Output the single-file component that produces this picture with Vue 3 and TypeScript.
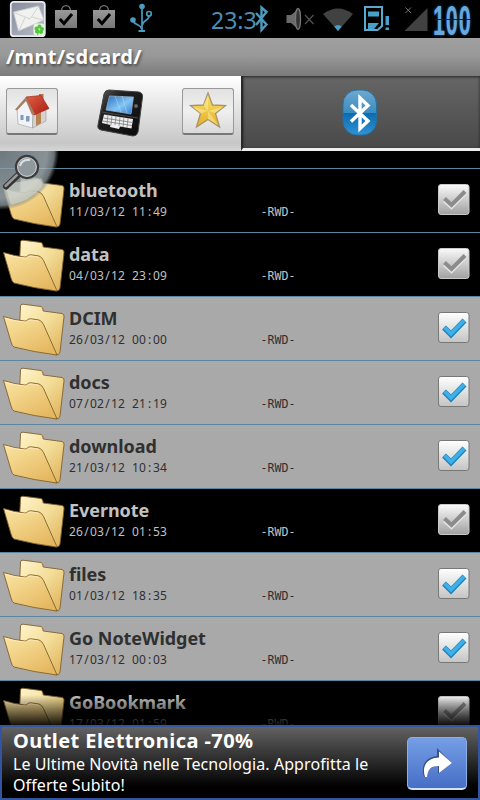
<template>
  <div class="screen">
    <div class="statusbar">
      <svg class="status-icons" width="480" height="38" viewBox="0 0 480 38">
        <defs>
          <linearGradient id="bag" x1="0" y1="0" x2="0" y2="1">
            <stop offset="0" stop-color="#999" />
            <stop offset="1" stop-color="#777" />
          </linearGradient>
          <linearGradient id="mail" x1="0" y1="0" x2="1" y2="1">
            <stop offset="0" stop-color="#858b9b" />
            <stop offset="1" stop-color="#b9bdc9" />
          </linearGradient>
        </defs>
        <!-- mail -->
        <rect x="10.8" y="1.8" width="34" height="34.4" rx="3" fill="url(#mail)" stroke="#e9e7ef" stroke-width="1.8" />
        <path d="M13.5 12 L38.5 6 L44 20 L18.5 31 Z" fill="#f1f1f0" stroke="#c9c9cc" stroke-width=".8" />
        <path d="M14 12.5 L30 19 L38.5 6.5 M19 30.5 L25 17.5 M43 20 L32 17" fill="none" stroke="#d3d3d3" stroke-width="1" />
        <rect x="33.5" y="23.5" width="11" height="12" rx="3" fill="#e5f5df" />
        <path d="M39 29.5 L37.5 35" stroke="#4fc53a" stroke-width="1.2" />
        <g fill="#4fc53a">
          <circle cx="36.5" cy="28.5" r="2" /><circle cx="39.5" cy="26.5" r="2" />
          <circle cx="42" cy="29" r="2" /><circle cx="37" cy="31.5" r="2" /><circle cx="41" cy="32" r="2" />
        </g>
        <!-- market bags -->
        <g v-for="x in [55, 93]" :key="x" :transform="`translate(${x} 0)`">
          <path d="M6.5 11 C6.5 3.8 15.5 3.8 15.5 11" fill="none" stroke="#777" stroke-width="1.3" />
          <rect y="10" width="22" height="18" fill="url(#bag)" />
          <path d="M4.8 19 L9 23.5 L17 14" fill="none" stroke="#000" stroke-width="3" />
        </g>
        <!-- usb -->
        <g fill="none" stroke="#4b9ac0" stroke-width="1.7">
          <path d="M142 7 V31 M133 20.5 C133 25 141.5 24 141.5 29 M149 16 C149 21 142.5 20 142.5 25" />
          <circle cx="149" cy="13.8" r="2.3" />
          <path d="M138.5 31 H145" stroke-width="2" />
        </g>
        <circle cx="142" cy="6.5" r="2.8" fill="#4b9ac0" />
        <circle cx="133" cy="20" r="2.8" fill="#4b9ac0" />
        <!-- bluetooth -->
        <path d="M256 13 L266.5 24.5 L261.5 30 V7.5 L266.5 12 L256 25" fill="none" stroke="#4b9ac0" stroke-width="2.4" />
        <!-- muted speaker -->
        <path d="M286.5 15 H291 L296 11 V27.5 L291 23 H286.5 Z" fill="#6b6b6b" />
        <ellipse cx="298" cy="19" rx="2.5" ry="10.5" fill="#333" stroke="#777" stroke-width="1.3" />
        <path d="M305 15 L313.5 24 M313.5 15 L305 24" stroke="#555" stroke-width="1.1" />
        <!-- wifi -->
        <path d="M323 14 Q338 3 353 14 L338 31 Z" fill="#414141" />
        <path d="M334.2 26.5 Q338 23.5 341.8 26.5 L338 31 Z" fill="#46a0c8" />
        <!-- sim warning -->
        <path d="M365 7 H382 V26 L377.5 30 H365 Z" fill="none" stroke="#5aaad0" stroke-width="2" />
        <path d="M368 11.5 H379 V16.5 H368 Z M368 23 H379 L374 29 H368 Z M385.5 16 H389 V25 H385.5 Z M385.5 27.5 H389 V30 H385.5 Z" fill="#46a0c8" />
        <!-- signal -->
        <path d="M404.5 31 L427.5 8 V31 Z" fill="#414141" />
        <path d="M405.5 7.5 L411 13 M411 7.5 L405.5 13" stroke="#777" stroke-width="1" />
      </svg>
      <span class="clock">23:3</span>
      <span class="battery">100</span>
      <span class="battery-gap"></span>
    </div>

    <div class="pathbar">{{ path }}</div>

    <div class="tabs">
      <div class="tabs-left">
        <div class="tab-button">
          <svg width="38" height="38" viewBox="0 0 38 38">
            <defs>
              <linearGradient id="roof" x1="0" y1="0" x2="1" y2="1">
                <stop offset="0" stop-color="#e06048" />
                <stop offset="1" stop-color="#a81c10" />
              </linearGradient>
            </defs>
            <path d="M26 2 H30.5 V13 H26 Z" fill="#b5714d" />
            <path d="M4 17 L13 7 L20 22 L19.5 36 L5 32 Z" fill="#f1f3f8" stroke="#a9a9b2" stroke-width=".7" />
            <path d="M20 23 L33 17 V29 L19.5 36 Z" fill="#d5d2d0" stroke="#999" stroke-width=".6" />
            <path d="M23 22 L28 20 V31 L23 34 Z" fill="#b88250" />
            <path d="M13 5 L28 3.5 L36 16.5 L21 23 Z" fill="url(#roof)" stroke="#9c2c1d" stroke-width=".7" />
            <path d="M13 5 L2 17.5 L4 18.5 L13 9 L19 23 L22 22 Z" fill="#a87d60" />
            <path d="M7.5 23 h3 v5 h-3 Z M13 24 h3.5 v5.5 h-3.5 Z" fill="#7e9abd" />
          </svg>
        </div>
        <svg class="phone" width="50" height="50" viewBox="0 0 50 50">
          <defs>
            <linearGradient id="case" x1="0" y1="0" x2="1" y2="1">
              <stop offset="0" stop-color="#5c5c5c" />
              <stop offset=".3" stop-color="#222" />
              <stop offset="1" stop-color="#090909" />
            </linearGradient>
            <linearGradient id="lcd" x1="0" y1="0" x2="1" y2="1">
              <stop offset="0" stop-color="#2870bd" />
              <stop offset=".55" stop-color="#85c5f4" />
              <stop offset="1" stop-color="#2b7dd0" />
            </linearGradient>
          </defs>
          <path d="M13 2 L43 4 Q47 5 46.5 9 L42 44 Q41 48 37 48 L5 42 Q1 41 2 37 L8 6 Q9 2 13 2 Z" fill="url(#case)" stroke="#444" />
          <path d="M13.5 8 L37.5 9 L35 26 L10 22 Z" fill="url(#lcd)" stroke="#8dabc4" stroke-width=".8" />
          <path d="M19 8 L25 24 M26 8 L31 25" stroke="#b6dcf8" opacity=".5" />
          <circle cx="40" cy="18" r="2.5" fill="#666" stroke="#111" />
          <path d="M6 24 L42 30" stroke="#555" stroke-width=".8" />
          <path d="M8 26.5 L37 31 L35.5 40.5 L24 38.5 L23 41 L14 39 L14.5 37 L6 35 Z" fill="#eee" />
          <path d="M7.5 30 L36.5 34.5 M7 33 L36 37.5" stroke="#777" stroke-width=".8" />
          <path d="M12 26 l-1 10 M16 27 l-1 10 M20 28 l-1 9 M24 29 l-1 9 M28 29 l-1 10 M32 30 l-1 10" stroke="#777" stroke-width=".7" />
        </svg>
        <div class="tab-button">
          <svg width="40" height="40" viewBox="0 0 40 40">
            <defs>
              <linearGradient id="star" x1="0" y1="0" x2="0" y2="1">
                <stop offset="0" stop-color="#f5e375" />
                <stop offset="1" stop-color="#e6ae20" />
              </linearGradient>
            </defs>
            <path d="M20 2 L24.5 14 L37.5 14.5 L27.5 22.5 L31.5 36 L20 28.5 L8.5 36 L12.5 22.5 L2.5 14.5 L15.5 14 Z" fill="url(#star)" stroke="#a8936a" stroke-width="1.3" />
            <path d="M20 4 V20 L15.5 14 Z M36 15.5 L20 20 L27 22 Z M30.5 34.5 L20 20 V28 Z M4 15.5 L20 20 L12.5 22.5 Z" fill="#fbef9f" opacity=".5" />
          </svg>
        </div>
      </div>
      <div class="tabs-right">
        <svg width="36" height="48" viewBox="0 0 36 48">
          <defs>
            <linearGradient id="bt" x1="0" y1="0" x2="0" y2="1">
              <stop offset="0" stop-color="#6fa9cf" />
              <stop offset=".5" stop-color="#3b8cc1" />
              <stop offset=".52" stop-color="#0b6bae" />
              <stop offset="1" stop-color="#2f93d4" />
            </linearGradient>
          </defs>
          <rect x="1" y="1" width="33.5" height="45" rx="14" fill="url(#bt)" stroke="#286f9f" />
          <path d="M9 16 L26 32 L18 39.5 V9 L26 16.5 L9 32.5" fill="none" stroke="#fff" stroke-width="3.4" />
        </svg>
      </div>
    </div>

    <div class="list">
      <div class="previous-row"></div>
      <div v-for="entry in entries" :key="entry.name" class="row" :class="{ selected: entry.selected }">
        <svg class="folder" width="69" height="63" viewBox="0 0 69 63">
          <defs>
            <linearGradient id="back" x1="0" y1="0" x2="1" y2="1">
              <stop offset="0" stop-color="#fff5cc" />
              <stop offset=".5" stop-color="#f3dc96" />
              <stop offset="1" stop-color="#dcae55" />
            </linearGradient>
            <linearGradient id="front" x1="0" y1="0" x2=".7" y2="1">
              <stop offset="0" stop-color="#fbe5a3" />
              <stop offset="1" stop-color="#e5b860" />
            </linearGradient>
          </defs>
          <path d="M20.5 10 Q20.5 8 23 8.2 L41 10.5 Q43 11 43.2 15 L62 17.5 Q64.5 18 64 21 L60 56 Q59.5 59 56 59 L19 42 Z" fill="url(#back)" stroke="#80602f" stroke-width=".9" stroke-linejoin="round" />
          <path d="M3.5 20.5 Q14 24 26 25.2 Q28 22.5 31 22.8 L39 24 Q42 25 43.5 28.5 Q50 43 57 59 Q33 56 14 51 Q12 50 11 46 Z" fill="url(#front)" stroke="#80602f" stroke-width=".9" stroke-linejoin="round" />
          <path d="M5 22.2 Q15 25.6 26.5 26.2 Q28.5 23.8 31 24 L38.5 25.2" fill="none" stroke="#fff0bf" stroke-width=".8" />
        </svg>
        <div class="info">
          <div class="name">{{ entry.name }}</div>
          <svg class="details" width="300" height="16" viewBox="0 0 300 16">
            <text :x="cells(entry.date)" y="12">{{ entry.date }}</text>
            <text class="flags" x="191.5" y="12">{{ flags }}</text>
          </svg>
        </div>
        <svg class="check" width="34" height="34" viewBox="0 0 34 34">
          <defs>
            <linearGradient id="box" x1="0" y1="0" x2="0" y2="1">
              <stop offset="0" stop-color="#fafafa" />
              <stop offset="1" stop-color="#a0a0a0" />
            </linearGradient>
            <linearGradient id="boxOn" x1="0" y1="0" x2="0" y2="1">
              <stop offset="0" stop-color="#fff" />
              <stop offset="1" stop-color="#c4c4c4" />
            </linearGradient>
          </defs>
          <rect x="1.5" y="1.5" width="30.5" height="30" rx="2.5" :fill="entry.selected ? 'url(#boxOn)' : 'url(#box)'" :stroke="entry.selected ? '#777' : '#c9c9c9'" />
          <template v-if="entry.selected">
            <path d="M7 16.5 L14 23.5 L27.5 9.5" fill="none" stroke="#2380b8" stroke-width="5.5" />
            <path d="M7.6 16.5 L14 22.8 L27 9.5" fill="none" stroke="#3bb0ea" stroke-width="3.8" />
          </template>
          <template v-else>
            <path d="M7.5 17.5 L14.5 24 L28 10" fill="none" stroke="#e6e6e6" stroke-width="4" />
            <path d="M7.5 15.5 L14.5 22 L28 8.5" fill="none" stroke="#8c8c8c" stroke-width="4" />
          </template>
        </svg>
      </div>
      <div class="fade"></div>
      <svg class="search" width="62" height="62" viewBox="0 0 62 62">
        <defs>
          <radialGradient id="corner" cx="0" cy="0" r="59" gradientUnits="userSpaceOnUse">
            <stop offset="0" stop-color="#7f8d96" stop-opacity=".85" />
            <stop offset=".8" stop-color="#a9b5bb" stop-opacity=".8" />
            <stop offset=".92" stop-color="#8c979c" stop-opacity=".75" />
            <stop offset="1" stop-color="#666" stop-opacity="0" />
          </radialGradient>
        </defs>
        <circle r="59" fill="url(#corner)" />
        <path d="M5 34 L12 32 L38 28 Q45 32 42 36 Q30 50 11 54 Z" fill="#dfe0d6" opacity=".55" />
        <path d="M18 24 L6 35.500" stroke="#333" stroke-width="6" stroke-linecap="round" />
        <path d="M17.5 23.500 L5.500 35" stroke="#999" stroke-width="2.5" stroke-linecap="round" />
        <circle cx="27" cy="16" r="11" fill="#a5adb2" stroke="#3c3c3c" stroke-width="2.3" />
        <circle cx="27" cy="16" r="9.3" fill="#8f989d" stroke="#c7cccf" stroke-width="1" />
        <path d="M20 15 Q22 8 30 9" fill="none" stroke="#d9dee0" stroke-width="2" />
      </svg>
    </div>

    <div class="ad">
      <div class="ad-text">
        <div class="ad-title">Outlet Elettronica -70%</div>
        <div class="ad-line">Le Ultime Novità nelle Tecnologia. Approfitta le</div>
        <div class="ad-line">Offerte Subito!</div>
      </div>
      <div class="ad-button">
        <svg width="40" height="40" viewBox="0 0 40 40">
          <path d="M7 34 C3 20 11 14 20 13 L20 5 L35 20 L21 31 V23 C14 23 11 27 10 34 Z" fill="#26375f" opacity=".7" />
          <path d="M8 34 C4 21 12 15 22 14.5 V8.5 L35 20 L22 30 V23 C14 23 11 26 10 34 Z" fill="#fff" />
        </svg>
      </div>
    </div>
  </div>
</template>

<script setup lang="ts">
interface Entry {
  name: string;
  date: string;
  selected: boolean;
}

const path = '/mnt/sdcard/';
const flags = '-RWD-';

const entries: Entry[] = [
  { name: 'bluetooth', date: '11/03/12 11:49', selected: false },
  { name: 'data', date: '04/03/12 23:09', selected: false },
  { name: 'DCIM', date: '26/03/12 00:00', selected: true },
  { name: 'docs', date: '07/02/12 21:19', selected: true },
  { name: 'download', date: '21/03/12 10:34', selected: true },
  { name: 'Evernote', date: '26/03/12 01:53', selected: false },
  { name: 'files', date: '01/03/12 18:35', selected: true },
  { name: 'Go NoteWidget', date: '17/03/12 00:03', selected: true },
  { name: 'GoBookmark', date: '17/03/12 01:59', selected: false },
];

// centre of each fixed-width character cell
function cells(text: string): string {
  return [...text].map((_, i) => 3.5 + i * 7).join(' ');
}
</script>

<style>
body {
  margin: 0;
  background: #000;
}
</style>

<style scoped>
.screen {
  width: 480px;
  height: 800px;
  display: flex;
  flex-direction: column;
  overflow: hidden;
  background: #000;
  font-family: "Noto Sans", "Open Sans", sans-serif;
}

.screen > div {
  box-sizing: border-box;
  flex-shrink: 0;
}

.statusbar {
  position: relative;
  height: 38px;
  background: #000;
}

.status-icons {
  display: block;
}

.clock {
  position: absolute;
  left: 211px;
  top: 3px;
  font-size: 23px;
  line-height: 34px;
  color: #4b8fb4;
}

.battery {
  position: absolute;
  right: 8px;
  top: 1px;
  font-family: "Liberation Sans", sans-serif;
  font-size: 43px;
  line-height: 38px;
  letter-spacing: 2px;
  font-weight: bold;
  color: #69a8dd;
  text-shadow: 0 0 4px #2466ae;
  transform: scaleX(0.5);
  transform-origin: right center;
}

.battery-gap {
  position: absolute;
  right: 9px;
  top: 19px;
  width: 36px;
  height: 1px;
  background: #0a1c30;
}

.pathbar {
  height: 38px;
  padding-left: 6px;
  background: linear-gradient(#a0a0a0, #999 45%, #7b7b7b);
  color: #fff;
  font-size: 20px;
  line-height: 37px;
  font-weight: bold;
  letter-spacing: 0.3px;
  text-shadow: 1px 2px 3px #444;
}

.tabs {
  display: flex;
  height: 75px;
}

.tabs-left {
  display: flex;
  align-items: flex-start;
  justify-content: space-between;
  box-sizing: border-box;
  width: 241px;
  padding: 12px 7px 0 6px;
  background: linear-gradient(#fff, #ddd 55%, #c7c7c7 90%, #d6d6d6);
}

.tab-button {
  display: flex;
  align-items: center;
  justify-content: center;
  box-sizing: border-box;
  width: 52px;
  height: 47px;
  border: 1px solid #999;
  border-bottom: 2px solid #777;
  border-radius: 3px;
  background: linear-gradient(#e2e2e2, #f0f0f0 50%, #d9d9d9);
}

.phone {
  margin-left: 1px;
}

.tabs-right {
  flex: 1;
  display: flex;
  align-items: flex-start;
  justify-content: center;
  box-sizing: border-box;
  padding: 13px 4px 0 0;
  border-left: 2px solid #292929;
  border-bottom: 3px solid #eee;
  background: linear-gradient(#666, #494949);
  box-shadow: inset 0 1px 3px #222;
}

.list {
  position: relative;
  height: 574px;
  overflow: hidden;
  background: #000;
}

.previous-row {
  height: 17px;
}

.row {
  display: flex;
  box-sizing: border-box;
  height: 64px;
  border-top: 1px solid #5a86a0;
  color: #c2c2c2;
}

.row.selected {
  background: #a9a9a9;
  color: #303030;
}

.folder {
  flex-shrink: 0;
  margin-top: -1px;
}

.info {
  flex: 1;
  min-width: 0;
}

.name {
  padding-top: 9px;
  font-size: 18px;
  line-height: 24px;
  font-weight: bold;
  letter-spacing: -0.05px;
}

.details {
  display: block;
  margin-top: 2px;
  font-size: 12px;
  text-anchor: middle;
  fill: currentColor;
}

.flags {
  font-family: "DejaVu Sans Mono", monospace;
  font-size: 11.6px;
  text-anchor: start;
}

.check {
  flex-shrink: 0;
  margin: 14px 9px 0 0;
}

.fade {
  position: absolute;
  left: 0;
  right: 0;
  bottom: 0;
  height: 30px;
  background: linear-gradient(rgba(0, 0, 0, 0), rgba(0, 0, 0, 0.9));
}

.search {
  position: absolute;
  left: 0;
  top: 0;
}

.ad {
  display: flex;
  justify-content: space-between;
  height: 75px;
  border: 2px solid #34549f;
  background: linear-gradient(#626262, #000 85%);
  color: #fff;
}

.ad-text {
  padding: 1px 0 0 11px;
  white-space: nowrap;
}

.ad-title {
  font-size: 20px;
  line-height: 26px;
  font-weight: bold;
  letter-spacing: 0.43px;
}

.ad-line {
  font-size: 16px;
  line-height: 21px;
  letter-spacing: 0.09px;
}

.ad-button {
  display: flex;
  align-items: center;
  justify-content: center;
  box-sizing: border-box;
  width: 60px;
  height: 53px;
  margin: 10px 11px 0 0;
  border: 1px solid #90aee5;
  border-bottom: 2px solid #d4e1fb;
  border-radius: 5px;
  background: linear-gradient(#759ee6, #466fc6);
}
</style>
